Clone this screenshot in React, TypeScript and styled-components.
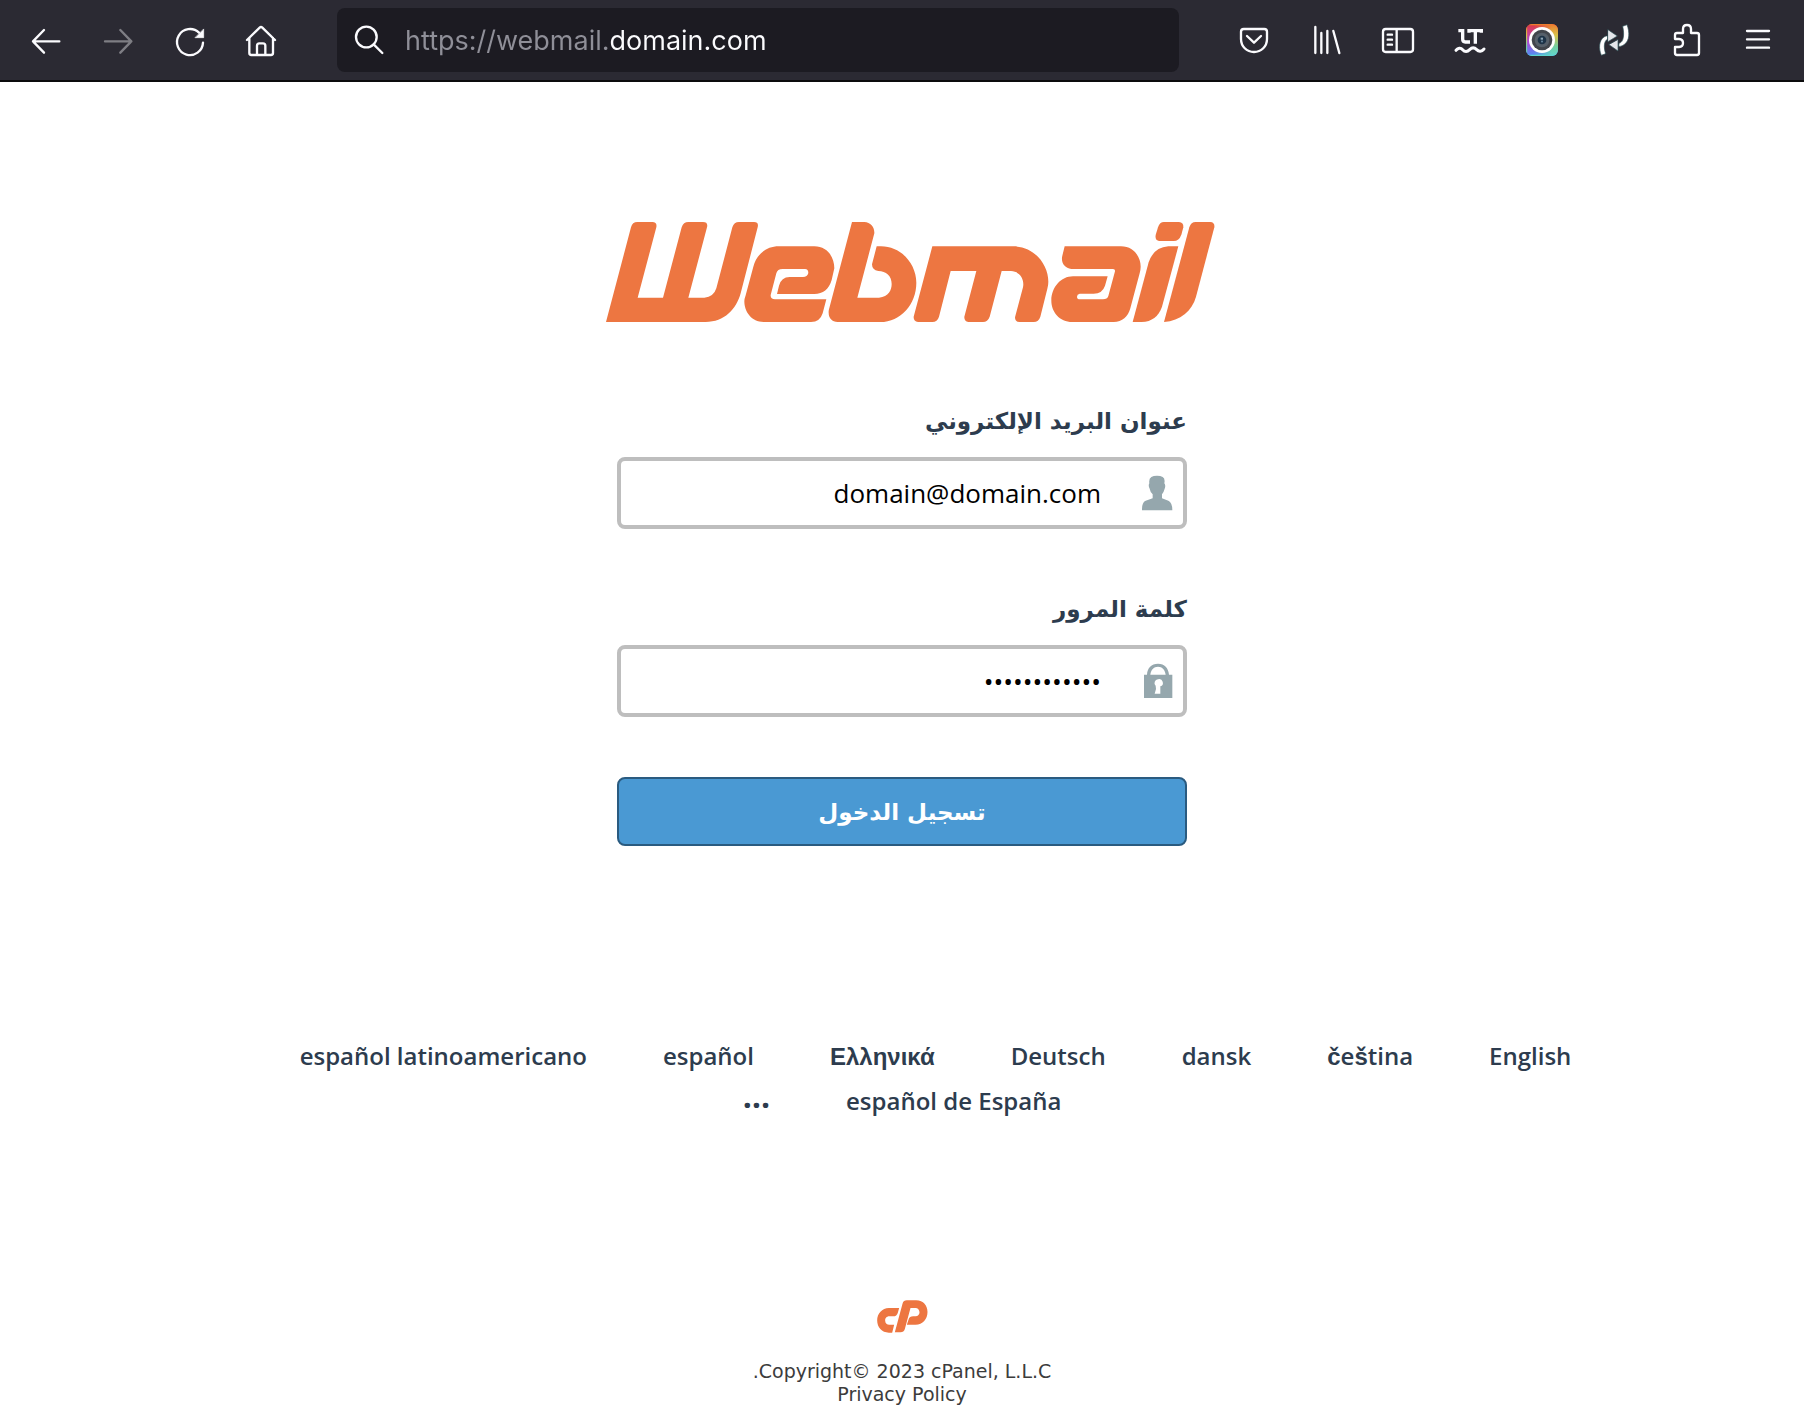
import React from "react";
import styled, { createGlobalStyle } from "styled-components";

const GlobalStyle = createGlobalStyle`
  *, *::before, *::after { box-sizing: border-box; }
  body {
    margin: 0;
    background: #fff;
    font-family: "Open Sans", "DejaVu Sans", sans-serif;
  }
`;

const ink = "#fbfbfe";
const orange = "#ed7641";
const navy = "#2d3c4e";

const Toolbar = styled.header`
  display: flex;
  align-items: center;
  height: 82px;
  padding: 0 10px;
  background: #2b2a33;
  border-bottom: 2px solid #0c0c0d;
`;

const ToolGroup = styled.nav`
  display: flex;
  flex: none;
`;

const ToolButton = styled.button<{ $dim?: boolean }>`
  display: flex;
  align-items: center;
  justify-content: center;
  width: 72px;
  height: 64px;
  padding: 0;
  border: 0;
  background: none;
  color: ${ink};
  opacity: ${(p) => (p.$dim ? 0.4 : 1)};
  cursor: pointer;
`;

const Glyph = styled.svg`
  display: block;
  flex: none;
  width: 32px;
  height: 32px;
  overflow: visible;
  fill: none;
  stroke: currentColor;
  stroke-width: 7;
  stroke-linecap: round;
  stroke-linejoin: round;
`;

const AddressBar = styled.label`
  display: flex;
  flex: 1;
  align-items: center;
  gap: 20px;
  min-width: 0;
  height: 64px;
  margin: 0 39px;
  padding: 0 16px;
  border-radius: 8px;
  background: #1c1b22;
  color: ${ink};
`;

const AddressInput = styled.input`
  flex: 1;
  min-width: 0;
  padding: 2px 0 0;
  border: 0;
  outline: 0;
  color: ${ink};
  font: 400 27px/40px Inter, "Liberation Sans", sans-serif;
  background: linear-gradient(to right, #8f8f98 203px, ${ink} 203px);
  background-clip: text;
  -webkit-background-clip: text;
  -webkit-text-fill-color: transparent;
`;

const Page = styled.main`
  display: flex;
  flex-direction: column;
  align-items: center;
  padding: 140px 24px 20px;
`;

const WordMark = styled.svg`
  display: block;
  width: 609px;
  max-width: 100%;
  height: 100px;
  margin-right: -16px;
  fill: ${orange};
`;

const LoginForm = styled.form`
  display: flex;
  flex-direction: column;
  gap: 60px;
  width: 100%;
  max-width: 570px;
  margin-top: 79px;
`;

const Group = styled.div`
  display: flex;
  flex-direction: column;
  gap: 16px;
`;

const Label = styled.label`
  color: ${navy};
  font: 700 23px/40px "DejaVu Sans", sans-serif;
`;

const Field = styled.div`
  display: flex;
  align-items: center;
  height: 72px;
  padding-inline-start: 10px;
  border: 4px solid #bebebe;
  border-radius: 8px;
  background: #fff;
`;

const FieldIcon = styled.svg`
  flex: none;
  width: 32px;
  height: 36px;
  fill: #95a7ad;
`;

const TextInput = styled.input`
  flex: 1;
  min-width: 0;
  height: 100%;
  padding: 0 40px 0 16px;
  border: 0;
  outline: 0;
  background: none;
  color: #000;
  font: 400 26px/36px "Open Sans", sans-serif;
`;

const Submit = styled.button`
  height: 69px;
  border: 2px solid #2a5b80;
  border-radius: 8px;
  background: #4a99d3;
  color: #fff;
  font: 700 23px/40px "DejaVu Sans", sans-serif;
  cursor: pointer;
`;

const Languages = styled.ul`
  display: flex;
  flex-wrap: wrap;
  justify-content: center;
  column-gap: 9px;
  width: 100%;
  max-width: 1560px;
  margin: 187px 0 0;
  padding: 0;
  list-style: none;
`;

const Language = styled.li`
  display: flex;
  align-items: flex-start;
  height: 45px;
  margin-inline-end: 67px;
  &:last-child { margin-inline-end: 0; }
`;

const LanguageLink = styled.a`
  color: ${navy};
  font-size: 24px;
  line-height: 45px;
  font-weight: 600;
  text-decoration: none;
  b { font-family: "Liberation Sans", sans-serif; font-weight: 700; }
`;

const MoreButton = styled.button`
  padding: 0;
  border: 0;
  background: none;
  color: ${navy};
  font: 700 32px/36px "Open Sans", sans-serif;
  cursor: pointer;
`;

const Footer = styled.footer`
  display: flex;
  flex-direction: column;
  align-items: center;
  margin-top: 177px;
  color: #3c3c3c;
  font: 400 19px/23px "DejaVu Sans", sans-serif;
  text-align: center;
`;

const Monogram = styled.svg`
  width: 51px;
  height: 33px;
  margin-bottom: 27px;
  fill: ${orange};
`;

const FooterLink = styled.a`
  color: inherit;
  text-decoration: none;
`;

const languages: { name: React.ReactNode; code: string }[] = [
  { name: "English", code: "en" },
  { name: <><b>č</b>e<b>š</b>tina</>, code: "cs" },
  { name: "dansk", code: "da" },
  { name: "Deutsch", code: "de" },
  { name: <b>Ελληνικά</b>, code: "el" },
  { name: "español", code: "es" },
  { name: "español latinoamericano", code: "es-419" },
  { name: "español de España", code: "es-ES" },
];

function BrowserBar() {
  return (
    <Toolbar>
      <ToolGroup aria-label="Navigation">
        <ToolButton aria-label="Back">
          <Glyph viewBox="90 72 96 96"><path d="M178 124H99M132 90l-33 34 33 34" /></Glyph>
        </ToolButton>
        <ToolButton aria-label="Forward" $dim>
          <Glyph viewBox="306 72 96 96"><path d="M315 124h79M361 90l33 34-33 34" /></Glyph>
        </ToolButton>
        <ToolButton aria-label="Reload">
          <Glyph viewBox="522 72 96 96">
            <path d="M609 128a39 39 0 1 1-12-30" />
            <path d="M611 88v25h-25z" fill="currentColor" strokeWidth="2" />
          </Glyph>
        </ToolButton>
        <ToolButton aria-label="Home">
          <Glyph viewBox="738 72 96 96">
            <path d="M741 120l38-37q4-4 8 0l38 37M748 114v45q0 6 6 6h59q6 0 6-6v-45M771 164v-27q0-7 7-7h11q7 0 7 7v27" />
          </Glyph>
        </ToolButton>
      </ToolGroup>
      <AddressBar>
        <Glyph viewBox="1058 72 96 96" aria-hidden="true">
          <circle cx="1098" cy="111" r="31" />
          <path d="M1120 133l26 26" />
        </Glyph>
        <AddressInput aria-label="Address" type="text" defaultValue="https://webmail.domain.com" spellCheck={false} />
      </AddressBar>
      <ToolGroup aria-label="Extensions">
        <ToolButton aria-label="Pocket">
          <Glyph viewBox="114 72 96 96">
            <path d="M131 87h62q8 0 8 8v22c0 22-17 39-39 39s-39-17-39-39V95q0-8 8-8z" />
            <path d="M141 108l21 20 21-20" />
          </Glyph>
        </ToolButton>
        <ToolButton aria-label="Library">
          <Glyph viewBox="330 72 96 96"><path d="M346 81v78M364 99v60M382 93v66M400 93l18 66" /></Glyph>
        </ToolButton>
        <ToolButton aria-label="Sidebar">
          <Glyph viewBox="546 72 96 96">
            <rect x="549" y="87" width="90" height="69" rx="8" />
            <path d="M590 88v67M563 104h13M563 119h13M563 134h13" />
          </Glyph>
        </ToolButton>
        <ToolButton aria-label="LanguageTool">
          <Glyph viewBox="762 72 96 96">
            <g strokeWidth="10" strokeLinecap="butt" strokeLinejoin="miter">
              <path d="M775 92h13v25q0 9 8 9h14M807 98v-6h37v6M826 91v40" />
            </g>
            <path strokeWidth="9" d="M768 151c6-7 14-9 20-2s14 7 21 0 14-7 21 0 15 6 22-2" />
          </Glyph>
        </ToolButton>
        <ToolButton aria-label="Screenshot">
          <Glyph viewBox="78 72 96 96">
            <defs>
              <linearGradient id="camBase" x1="0" y1="0" x2="0" y2="1">
                <stop offset="0" stopColor="#e0393f" />
                <stop offset=".55" stopColor="#b345d8" />
                <stop offset="1" stopColor="#4b93f5" />
              </linearGradient>
              <linearGradient id="camRight" x1="0" y1="0" x2="0" y2="1">
                <stop offset="0" stopColor="#ee7a2d" />
                <stop offset=".35" stopColor="#d8c34a" />
                <stop offset=".7" stopColor="#74cf9f" />
                <stop offset="1" stopColor="#5fd6cf" />
              </linearGradient>
              <linearGradient id="camFade" x1="0" y1="0" x2="1" y2="0">
                <stop offset=".25" stopColor="#000" />
                <stop offset=".8" stopColor="#fff" />
              </linearGradient>
              <mask id="camMask"><rect x="78" y="72" width="96" height="96" fill="url(#camFade)" /></mask>
            </defs>
            <g stroke="none">
              <rect x="78" y="72" width="96" height="96" rx="18" fill="url(#camBase)" />
              <rect x="78" y="72" width="96" height="96" rx="18" fill="url(#camRight)" mask="url(#camMask)" />
              <circle cx="126" cy="120" r="39" fill="#fff" />
              <circle cx="126" cy="120" r="31" fill="#42464c" />
              <circle cx="126" cy="120" r="22" fill="#56606a" />
              <circle cx="126" cy="120" r="13" fill="#1d3347" />
              <rect x="122" y="113" width="7" height="6" fill="#8fa7b8" />
              <rect x="123" y="122" width="6" height="5" fill="#5f7f96" />
            </g>
          </Glyph>
        </ToolButton>
        <ToolButton aria-label="Sync">
          <Glyph viewBox="294 72 96 96">
            <g stroke="#2f5257" strokeWidth="2" fill="#fff">
              <path d="M368 79l13-5c8 22 9 48-9 60-6 4-12 6-16 5l1-9c14-3 17-26 11-51z" />
              <path d="M317 161l-13 5c-8-20-8-44 8-55 4-3 8-4 11-3v9c-11 6-13 24-6 44z" />
              <path d="M324 89l28 19-28 17zM354 119v34l-27-19z" fill="#e4e6ea" />
            </g>
          </Glyph>
        </ToolButton>
        <ToolButton aria-label="Add-ons">
          <Glyph viewBox="510 72 96 96">
            <path d="M531 99h18V87q0-12 12-12t12 12v12h18q6 0 6 6v54q0 6-6 6h-60q-6 0-6-6v-18h12q12-1 12-12t-12-12h-12v-12q0-6 6-6z" />
          </Glyph>
        </ToolButton>
        <ToolButton aria-label="Menu">
          <Glyph viewBox="726 72 96 96"><path d="M741 93h66M741 118h66M741 143h66" /></Glyph>
        </ToolButton>
      </ToolGroup>
    </Toolbar>
  );
}

function WebmailLogo() {
  return (
    <WordMark viewBox="47 66 1827 300" role="img" aria-label="Webmail">
      <path d="M47 366L122 82Q126 66 141 66H186Q201 66 198 82L142 293H218L274 82Q279 66 294 66H338Q354 66 350 82L294 293H342Q370 291 378 265L426 82Q431 66 446 66H491Q506 66 502 82L451 280C438 328 402 366 346 366Z" />
      <path d="M489 200C497 166 526 139 565 139H672C710 139 732 170 732 205L724 240C716 268 698 282 672 282H560L566 257Q573 231 598 231H638Q651 231 654 219Q654 207 644 207H577Q561 207 558 220L541 285Q540 298 554 298H708L697 340Q689 366 662 366H520C484 366 462 336 462 304Q462 297 466 286Z" />
      <path d="M785 66H822C841 67 853 82 852 100L801 293H866C895 290 904 270 904 252C904 228 887 213 864 213Q845 210 845 193L859 139H872C934 139 978 193 978 248C978 313 931 366 870 366H742C725 365 715 354 715 338Q714 333 718 320Z" />
      <path d="M1026 139H1270C1334 140 1374 195 1374 245Q1374 256 1371 266L1350 350Q1345 366 1330 366H1288Q1274 366 1274 352L1298 262C1303 237 1288 214 1262 213H1234L1198 350Q1192 366 1178 366H1134Q1121 364 1122 350L1158 213H1081L1046 350Q1041 366 1026 366H983Q969 364 970 350Z" />
      <path d="M1423 139H1592C1630 139 1651 170 1651 200Q1651 208 1648 220L1620 325C1613 350 1596 366 1570 366H1446C1407 366 1383 335 1383 302C1383 262 1412 229 1448 229H1552L1544 257Q1536 281 1510 281H1468Q1460 283 1460 290Q1460 298 1469 298H1538Q1551 298 1554 288L1574 214Q1575 207 1568 207H1443C1422 205 1411 187 1416 167Z" />
      <path d="M1721 66H1766Q1780 67 1779 82L1773 104Q1766 123 1750 123H1706Q1693 121 1696 105L1703 82Q1708 66 1721 66Z" />
      <path d="M1764 139L1715 320Q1700 364 1654 366H1627L1675 187Q1690 142 1734 139Z" />
      <path d="M1816 66H1860Q1874 67 1872 82L1817 290C1805 333 1770 362 1721 366L1797 82Q1802 66 1816 66Z" />
    </WordMark>
  );
}

export default function App() {
  return (
    <>
      <GlobalStyle />
      <BrowserBar />
      <Page dir="rtl" lang="ar">
        <WebmailLogo />
        <LoginForm onSubmit={(e) => e.preventDefault()}>
          <Group>
            <Label htmlFor="email">عنوان البريد الإلكتروني</Label>
            <Field>
              <FieldIcon viewBox="63 45 96 108" aria-hidden="true">
                <path d="M94 51Q100 47 111 47T128 51Q136 56 133 70Q138 76 134 86Q131 97 126 103V115L145 122Q157 127 157 151H66Q65 127 77 122L98 115V103Q91 97 89 86Q84 77 88 70Q86 55 94 51Z" />
              </FieldIcon>
              <TextInput id="email" type="text" defaultValue="domain@domain.com" />
            </Field>
          </Group>
          <Group>
            <Label htmlFor="password">كلمة المرور</Label>
            <Field>
              <FieldIcon viewBox="63 609 96 108" aria-hidden="true">
                <path fillRule="evenodd" d="M72 644H81C82 624 94 611 114 611S145 624 147 644H157V714H72ZM91 644H137C135 629 127 620 114 620S93 629 91 644ZM114 658A11 11 0 0 0 107 677L108 687L104 701H121V679A11 11 0 0 0 114 658Z" />
              </FieldIcon>
              <TextInput id="password" type="password" defaultValue="passwordpass" />
            </Field>
          </Group>
          <Submit type="submit">تسجيل الدخول</Submit>
        </LoginForm>
        <Languages>
          {languages.map((l) => (
            <Language key={l.code}>
              <LanguageLink href={`#${l.code}`} lang={l.code}>{l.name}</LanguageLink>
            </Language>
          ))}
          <Language>
            <MoreButton type="button">…</MoreButton>
          </Language>
        </Languages>
        <Footer>
          <Monogram viewBox="441 63 152 99" role="img" aria-label="cPanel">
            <path d="M476 87H507L503 101Q500 112 489 112H478C468 112 465 119 465 125C465 133 471 137 477 137H492L486 161H476C455 161 441 145 441 124C441 104 456 87 476 87Z" />
            <path d="M530 64H558C580 64 592 80 592 99C592 120 578 137 556 137H530L535 122Q538 112 549 112H556C564 112 568 106 568 100C568 93 563 87 556 87H541L524 150Q521 160 511 160H494L517 74Q520 64 530 64Z" />
          </Monogram>
          <span>Copyright© 2023 cPanel, L.L.C.</span>
          <FooterLink href="#privacy">Privacy Policy</FooterLink>
        </Footer>
      </Page>
    </>
  );
}
